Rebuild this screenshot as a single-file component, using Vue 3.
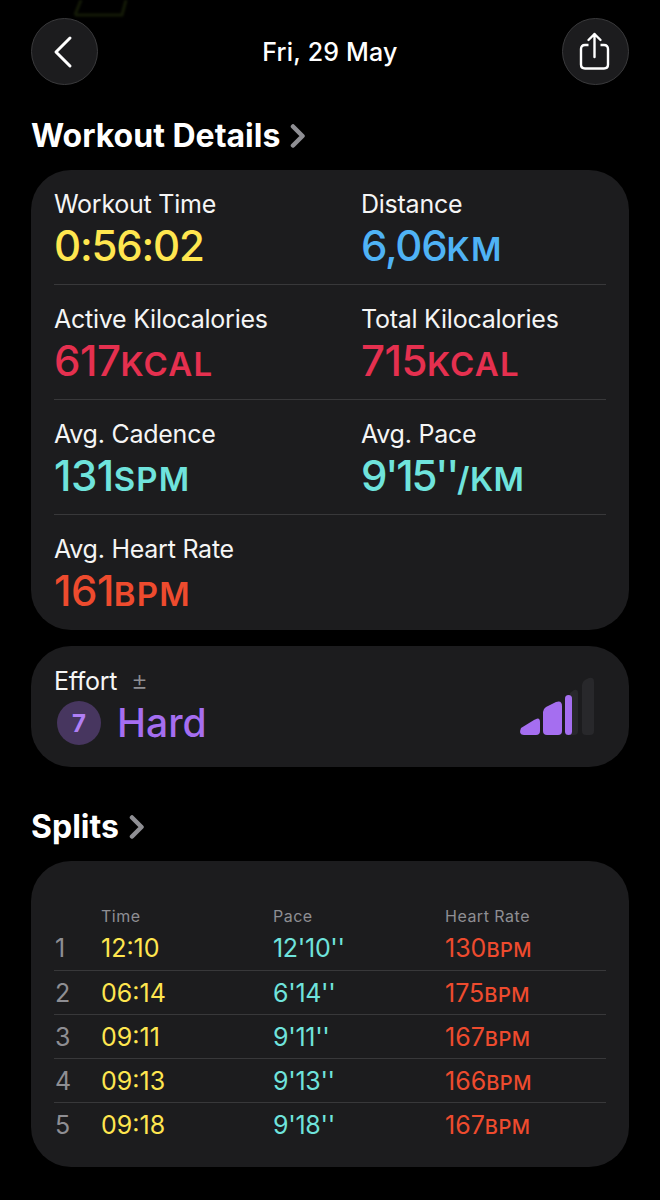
<template>
  <div class="page">
    <svg class="glow" width="60" height="20" viewBox="0 0 60 20">
      <path d="M3 15 L9 0 M3 15 H50 L54 0" fill="none" stroke="#141a07" stroke-width="3" />
    </svg>

    <header class="top">
      <button class="round">
        <svg width="34" height="34" viewBox="0 0 34 34">
          <path d="M22 3 L8 17 L22 31" fill="none" stroke="#fff" stroke-width="3" stroke-linecap="round" stroke-linejoin="round" />
        </svg>
      </button>
      <div class="date">Fri, 29 May</div>
      <button class="round">
        <svg width="34" height="42" viewBox="0 0 34 42">
          <path d="M10.5 14 H7 Q3 14 3 18 V33.5 Q3 37.5 7 37.5 H26 Q30 37.5 30 33.5 V18 Q30 14 26 14 H22.5" fill="none" stroke="#fff" stroke-width="2.4" />
          <path d="M16.5 26 V3 M10.5 9 L16.5 3 L22.5 9" fill="none" stroke="#fff" stroke-width="2.4" stroke-linecap="round" stroke-linejoin="round" />
        </svg>
      </button>
    </header>

    <h2 class="heading first">
      Workout Details
      <svg class="chev" width="16" height="24" viewBox="0 0 16 24">
        <path d="M3 2.5 L12.5 12 L3 21.5" fill="none" stroke="#8e8e93" stroke-width="4.5" stroke-linecap="round" stroke-linejoin="round" />
      </svg>
    </h2>

    <section class="card details">
      <div v-for="(row, i) in details" :key="i" class="detail-row">
        <div v-for="item in row" :key="item.label" class="detail">
          <div class="label">{{ item.label }}</div>
          <div class="value" :class="[item.color, item.fit]">{{ item.value }}<span class="unit">{{ item.unit }}</span></div>
        </div>
      </div>
    </section>

    <section class="card effort">
      <div>
        <div class="label">Effort <span class="pm">±</span></div>
        <div class="effort-value">
          <span class="badge">7</span>
          <span class="hard">Hard</span>
        </div>
      </div>
      <svg class="bars" width="75" height="58" viewBox="0 0 75 58">
        <path d="M62 7 Q62 4 65 2 L69 0 Q74 -1 74 4 V53 Q74 57 70 57 H66 Q62 57 62 53 Z" fill="#28282b" />
        <path d="M50 15 L54 12 Q58 11 58 15 V53 Q58 57 54 57 H50 Z" fill="#28282b" />
        <path d="M1 50 L14 42 Q20 38 20 44 V53 Q20 57 16 57 H4 Q-2 57 1 50 Z" fill="#a56ef0" />
        <path d="M23 34 Q23 31 26 29 L36 24 Q42 22 42 28 V53 Q42 57 38 57 H27 Q23 57 23 53 Z" fill="#a56ef0" />
        <rect x="45" y="17" width="7" height="40" rx="3.5" fill="#a56ef0" />
      </svg>
    </section>

    <h2 class="heading second">
      Splits
      <svg class="chev" width="16" height="24" viewBox="0 0 16 24">
        <path d="M3 2.5 L12.5 12 L3 21.5" fill="none" stroke="#8e8e93" stroke-width="4.5" stroke-linecap="round" stroke-linejoin="round" />
      </svg>
    </h2>

    <section class="card splits">
      <div class="split-head">
        <span></span>
        <span>Time</span>
        <span>Pace</span>
        <span>Heart Rate</span>
      </div>
      <div v-for="(s, i) in splits" :key="i" class="split-row">
        <span class="num">{{ i + 1 }}</span>
        <span class="yellow">{{ s.time }}</span>
        <span class="teal pace">{{ s.pace }}</span>
        <span class="orange">{{ s.hr }}<small>BPM</small></span>
      </div>
    </section>
  </div>
</template>

<script setup>
const details = [
  [
    { label: "Workout Time", value: "0:56:02", unit: "", color: "yellow", fit: "tight" },
    { label: "Distance", value: "6,06", unit: "KM", color: "blue", fit: "tight" },
  ],
  [
    { label: "Active Kilocalories", value: "617", unit: "KCAL", color: "pink" },
    { label: "Total Kilocalories", value: "715", unit: "KCAL", color: "pink" },
  ],
  [
    { label: "Avg. Cadence", value: "131", unit: "SPM", color: "teal" },
    { label: "Avg. Pace", value: "9'15''", unit: "/KM", color: "teal", fit: "primes" },
  ],
  [{ label: "Avg. Heart Rate", value: "161", unit: "BPM", color: "orange" }],
];

const splits = [
  { time: "12:10", pace: "12'10''", hr: "130" },
  { time: "06:14", pace: "6'14''", hr: "175" },
  { time: "09:11", pace: "9'11''", hr: "167" },
  { time: "09:13", pace: "9'13''", hr: "166" },
  { time: "09:18", pace: "9'18''", hr: "167" },
];
</script>

<style>
html,
body {
  background: #000;
}
</style>

<style scoped>
.page {
  position: relative;
  width: 660px;
  height: 1200px;
  overflow: hidden;
  box-sizing: border-box;
  padding: 18px 31px 0;
  background: #000;
  color: #fff;
  font-family: Inter, "Liberation Sans", sans-serif;
}

.glow {
  position: absolute;
  left: 72px;
  top: 0;
  filter: blur(1px);
}

.top {
  display: flex;
  align-items: center;
  justify-content: space-between;
}

.round {
  display: flex;
  align-items: center;
  justify-content: center;
  width: 67px;
  height: 67px;
  padding: 0;
  border: 1px solid #3a3a3c;
  border-radius: 50%;
  background: #1c1c1e;
}

.date {
  font-size: 25px;
  font-weight: 500;
  letter-spacing: 0.2px;
}

.heading {
  display: flex;
  align-items: center;
  gap: 10px;
  margin: 0;
  font-size: 32px;
  line-height: 40px;
  font-weight: 700;
}

.first {
  margin-top: 31px;
  margin-bottom: 14px;
}

.second {
  margin-top: 40px;
  margin-bottom: 14px;
}

.card {
  background: #1c1c1e;
  border-radius: 40px;
}

.details {
  height: 460px;
  box-sizing: border-box;
  padding: 0 23px;
}

.detail-row {
  display: grid;
  grid-template-columns: 307px 1fr;
  height: 115px;
  box-sizing: border-box;
  padding-top: 18px;
  border-bottom: 1px solid #38383a;
}

.detail-row:last-child {
  border-bottom: none;
}

.label {
  font-size: 25px;
  line-height: 32px;
  color: #f5f5f5;
  letter-spacing: -0.25px;
}

.value {
  margin-top: 1px;
  font-size: 42px;
  line-height: 50px;
  font-weight: 500;
  letter-spacing: -0.5px;
}

.tight {
  letter-spacing: -1.2px;
}

.primes {
  letter-spacing: -2.2px;
}

.unit {
  font-size: 33px;
  font-weight: 600;
  letter-spacing: 1.2px;
}

.primes .unit {
  letter-spacing: 0.4px;
}

.yellow {
  color: #ffe64f;
}

.blue {
  color: #4fb2f5;
}

.pink {
  color: #e5304f;
}

.teal {
  color: #6fe3dc;
}

.orange {
  color: #ee4b2e;
}

.effort {
  display: flex;
  align-items: flex-start;
  justify-content: space-between;
  height: 121px;
  margin-top: 16px;
  box-sizing: border-box;
  padding: 19px 34px 0 23px;
}

.pm {
  margin-left: 7px;
  font-size: 26px;
  font-weight: 300;
  color: #8e8e93;
}

.effort-value {
  display: flex;
  align-items: center;
  gap: 16px;
  margin-top: 1px;
  padding-left: 3px;
}

.badge {
  display: flex;
  align-items: center;
  justify-content: center;
  width: 44px;
  height: 44px;
  border-radius: 50%;
  background: #47365f;
  color: #b07ff5;
  font-size: 24px;
  font-weight: 700;
}

.hard {
  font-size: 39px;
  line-height: 50px;
  font-weight: 500;
  color: #a56ef0;
}

.bars {
  margin-top: 13px;
  overflow: visible;
}

.splits {
  height: 306px;
  box-sizing: border-box;
  padding: 45px 23px 0;
}

.split-head,
.split-row {
  display: grid;
  grid-template-columns: 47px 172px 172px 1fr;
}

.split-head {
  font-size: 16px;
  line-height: 20px;
  color: #8e8e93;
  letter-spacing: 0.5px;
}

.split-row {
  height: 44px;
  align-items: center;
  box-sizing: border-box;
  border-bottom: 1px solid #38383a;
  font-size: 25px;
}

.split-head + .split-row {
  height: 45px;
}

.split-row:last-child {
  border-bottom: none;
}

.num {
  padding-left: 1px;
  color: #8e8e93;
}

.pace {
  letter-spacing: -0.3px;
}

small {
  font-size: 20px;
  font-weight: 500;
  letter-spacing: 0.5px;
}
</style>
